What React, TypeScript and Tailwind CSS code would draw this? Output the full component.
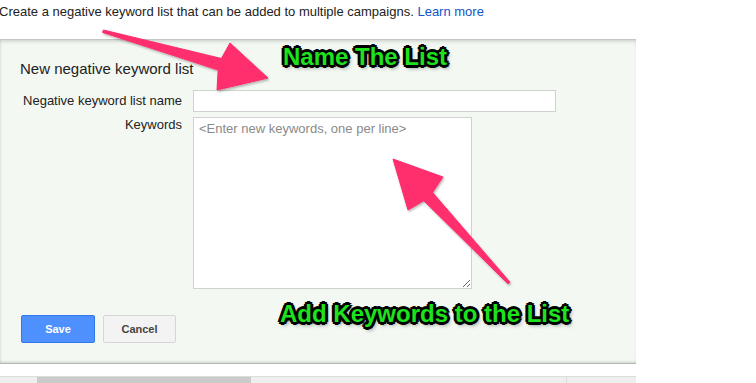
import { useState } from "react";

const annotationClass =
  "absolute whitespace-nowrap font-bold text-[24px] leading-[28px] text-[#1de21d] [font-family:'Liberation_Sans',Arial,sans-serif] [text-shadow:-2px_-2px_0_#000,2px_-2px_0_#000,-2px_2px_0_#000,2px_2px_0_#000,0_-3px_0_#000,0_3px_0_#000,-3px_0_0_#000,3px_0_0_#000,0_0_2px_#000,2px_3px_4px_rgba(0,0,0,0.55)]";

function Arrows() {
  return (
    <svg
      className="pointer-events-none absolute left-0 top-0"
      width="756"
      height="383"
      viewBox="0 0 756 383"
    >
      <defs>
        <filter id="arrowShadow" x="-10%" y="-10%" width="120%" height="120%">
          <feDropShadow dx="1" dy="1.5" stdDeviation="1.2" floodColor="#000" floodOpacity="0.3" />
        </filter>
      </defs>
      <g fill="#ff2d6d" stroke="#ff2d6d" strokeWidth="1" strokeLinejoin="round" filter="url(#arrowShadow)">
        {/* name arrow */}
        <polygon points="103.4,30 221.4,58.5 230,43 268,78 217,90 218.2,70.1 102.6,32.4" />
        {/* keywords arrow */}
        <polygon points="510,282.2 432.6,192.5 443,177 393,159 408,210 423.8,200.7 508,283.8" />
      </g>
    </svg>
  );
}

export default function App() {
  const [listName, setListName] = useState("");
  const [keywords, setKeywords] = useState("");

  return (
    <div className="relative h-[383px] w-[756px] overflow-hidden bg-white text-[#222] [font-family:'Liberation_Sans',Arial,sans-serif]">
      <div className="h-[39px] pt-[4px] -ml-[1px] whitespace-nowrap text-[13px] leading-[16px] text-[#222]">
        Create a negative keyword list that can be added to multiple campaigns.{" "}
        <a href="#" className="text-[#1155cc]">Learn more</a>
      </div>

      <section className="flex h-[325px] w-[636px] flex-col border-t border-b border-t-[#c3c9c2] border-b-[#b3b9b2] bg-[#f3f8f2] pt-[20px] pl-[20px] shadow-[inset_0_3px_4px_-2px_rgba(0,0,0,0.18),inset_2px_0_3px_-2px_rgba(0,0,0,0.12),inset_0_-3px_3px_-2px_rgba(0,0,0,0.15)]">
        <h2 className="text-[15px] leading-[18px] font-normal text-[#222]">New negative keyword list</h2>

        <div className="mt-[12px] grid grid-cols-[162px_auto] gap-x-[11px] gap-y-[5px]">
          <label className="self-center text-right text-[13px] leading-[16px] text-[#222]">
            Negative keyword list name
          </label>
          <input
            value={listName}
            onChange={(e) => setListName(e.target.value)}
            className="h-[22px] w-[363px] border border-[#cfd2cf] bg-white px-[5px] text-[13px] outline-none"
          />

          <label className="text-right text-[13px] leading-[16px] text-[#222]">Keywords</label>
          <textarea
            value={keywords}
            onChange={(e) => setKeywords(e.target.value)}
            placeholder="<Enter new keywords, one per line>"
            className="h-[172px] w-[279px] border border-[#cfd2cf] bg-white px-[5px] py-[2px] text-[13px] leading-[17px] outline-none placeholder:text-[#8a8a8a]"
          />
        </div>

        <div className="mt-[26px] flex gap-[8px] pl-[1px]">
          <button className="h-[28px] w-[74px] rounded-[2px] border border-[#3079ed] bg-[#4d90fe] text-[11px] font-bold text-white">
            Save
          </button>
          <button className="h-[28px] w-[73px] rounded-[2px] border border-[#d6d6d6] bg-[#f3f3f3] text-[11px] font-bold text-[#444]">
            Cancel
          </button>
        </div>
      </section>

      <div className="mt-[12px] flex h-[7px] w-[636px] border-t border-[#dcdcdc] bg-[#eeeeee]">
        <div className="w-[37px]" />
        <div className="w-[214px] bg-[#cbcbcb]" />
        <div className="w-[315px]" />
        <div className="w-px bg-[#dcdcdc]" />
      </div>

      <Arrows />

      <div className={annotationClass + " left-[283px] top-[43px]"}>Name The List</div>
      <div className={annotationClass + " left-[280px] top-[300px]"}>Add Keywords to the List</div>
    </div>
  );
}
